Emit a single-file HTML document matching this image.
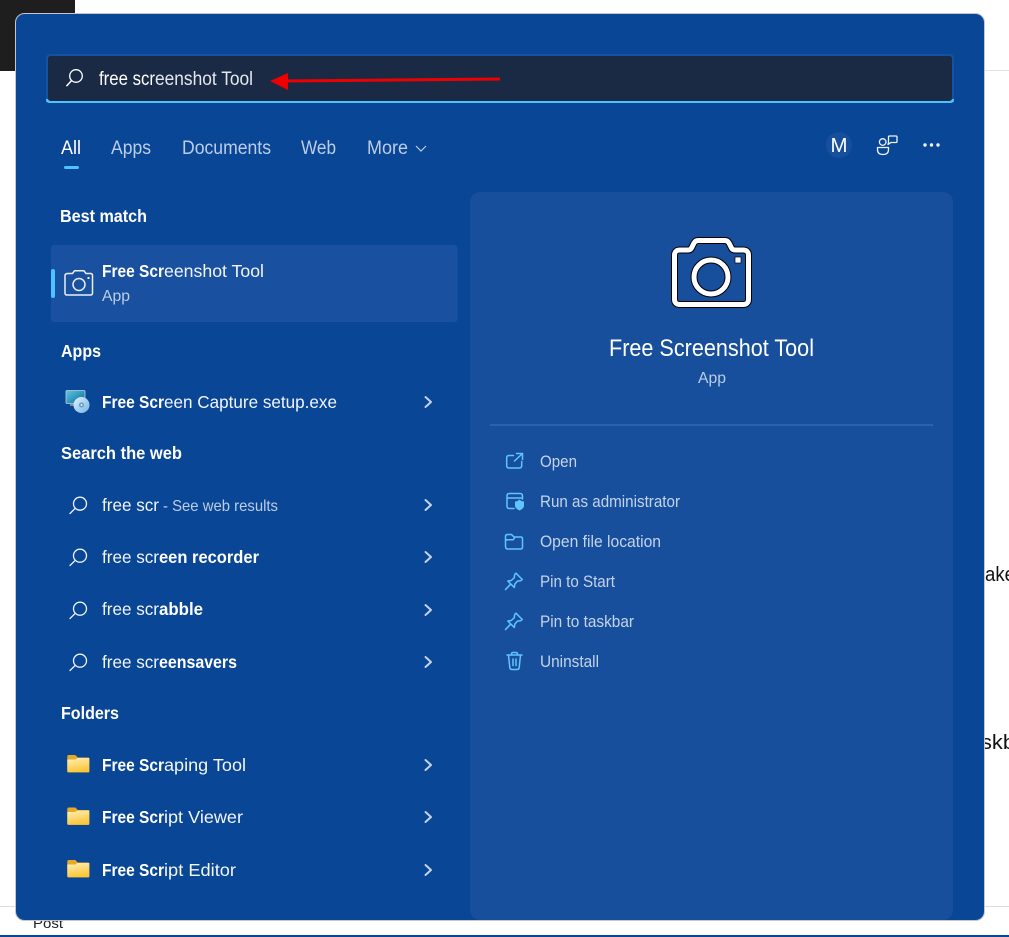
<!DOCTYPE html>
<html><head><meta charset="utf-8"><title>Search</title>
<style>
html,body{margin:0;padding:0;background:#fff;width:1009px;height:937px;overflow:hidden}
svg{display:block}
text{font-family:"Liberation Sans",sans-serif;fill:#fff;font-size:17.5px}
.b{font-weight:bold}
.h{font-weight:bold;font-size:17.5px}
.n{fill:#f2f5fa}
.tab{font-size:19px;fill:#bccde8}
.sub{fill:#bccde8;font-size:16px}
.act{fill:#c4d3ea;font-size:16.5px}
.bg{fill:#111;font-size:20px}
.ic{fill:none;stroke:#60c5ff;stroke-width:1.500;stroke-linejoin:round;stroke-linecap:round}
.s{fill:none;stroke:#eef3fa;stroke-width:1.300;stroke-linecap:round}
.c{fill:none;stroke:#c5d3ea;stroke-width:2;stroke-linecap:round;stroke-linejoin:round}
</style></head><body>
<svg width="1009" height="937" viewBox="0 0 1009 937" xmlns="http://www.w3.org/2000/svg">
<defs>
<linearGradient id="fg" x1="0" y1="0" x2="0.300" y2="1"><stop offset="0" stop-color="#fff0ba"/><stop offset="1" stop-color="#fcc73c"/></linearGradient>
<linearGradient id="cd" x1="0" y1="0" x2="1" y2="1"><stop offset="0" stop-color="#e4f3fb"/><stop offset="1" stop-color="#6fb4e4"/></linearGradient>
<linearGradient id="mon" x1="0" y1="0" x2="1" y2="1"><stop offset="0" stop-color="#5ec6e4"/><stop offset="1" stop-color="#0a6c9c"/></linearGradient>
<g id="srch"><circle cx="10" cy="-1.300" r="6.500" class="s"/><path d="M5.300 3.300L0 8.500" class="s"/></g>
<path id="chev" d="M-2.500 -5L3 0L-2.500 5" class="c"/>
<g id="fold"><path d="M0 1.500Q0 0 1.500 0H8L10.500 2.500H21Q22 2.500 22 4V16.500Q22 17.500 21 17.500H1Q0 17.500 0 16.500Z" fill="#e6a92a"/><path d="M0 4.500H8L10 3H22V16Q22 17 21 17H1Q0 17 0 16Z" fill="url(#fg)"/></g>
<g id="pin"><path d="M11 0.700L17.300 7L15.700 8.200L12.500 8.600L9.800 11.600L9.300 15L2.800 8.500L6.200 8L9.200 5.300L9.700 2Z" class="ic"/><path d="M5.500 11.800L0.500 17" class="ic"/></g>
</defs>

<!-- page behind -->
<rect width="1009" height="937" fill="#fff"/>
<rect x="0" y="0" width="75" height="71" fill="#1e1e1e"/>
<rect x="75" y="70" width="934" height="1" fill="#e3e3e3"/>
<rect x="106" y="13" width="39" height="1" fill="#3d5f8c"/>
<rect x="0" y="906" width="1009" height="1" fill="#dcdcdc"/>
<rect x="0" y="935" width="1009" height="2" fill="#0a4696"/>
<text x="33" y="928" style="font-size:14px;fill:#222" textLength="30" lengthAdjust="spacingAndGlyphs">Post</text>
<text x="985" y="581" class="bg" textLength="30" lengthAdjust="spacingAndGlyphs">ake</text>
<text x="981" y="749" class="bg" textLength="34" lengthAdjust="spacingAndGlyphs">skb</text>

<!-- panel -->
<rect x="15.500" y="13.500" width="969" height="907" rx="9" fill="#0a4696" stroke="#c4c8ce" stroke-width="1"/>
<rect x="470" y="192" width="483" height="728" rx="10" fill="#174f9d"/>

<!-- search -->
<rect x="46" y="54" width="908" height="49" rx="4" fill="#15529f"/>
<path d="M46 99V100Q46 103 50 103H950Q954 103 954 100V99Z" fill="#4cc2ff"/>
<rect x="48" y="56" width="904" height="45" rx="2.500" fill="#1a2a44"/>
<g><circle cx="76" cy="76" r="6.300" fill="none" stroke="#fff" stroke-width="1.300"/><path d="M71.500 80.600L66.800 85.700" stroke="#fff" stroke-width="1.500" stroke-linecap="round"/></g>
<text x="99" y="85" style="font-size:19px" textLength="56" lengthAdjust="spacingAndGlyphs">free scr</text>
<text x="155" y="85" style="font-size:19px;fill:#e4e8ee" textLength="98" lengthAdjust="spacingAndGlyphs">eenshot Tool</text>
<path d="M500 79L285 81" stroke="#ee0000" stroke-width="3" fill="none"/>
<path d="M270 81L288 73V90Z" fill="#ee0000"/>

<!-- tabs -->
<text x="61" y="154" style="font-size:19px" textLength="20" lengthAdjust="spacingAndGlyphs">All</text>
<text x="111" y="154" class="tab" textLength="40" lengthAdjust="spacingAndGlyphs">Apps</text>
<text x="182" y="154" class="tab" textLength="89" lengthAdjust="spacingAndGlyphs">Documents</text>
<text x="301" y="154" class="tab" textLength="35" lengthAdjust="spacingAndGlyphs">Web</text>
<text x="367" y="154" class="tab" textLength="41" lengthAdjust="spacingAndGlyphs">More</text>
<path d="M416 146L421 151L426 146" fill="none" stroke="#bccde8" stroke-width="1.200"/>
<rect x="64" y="166" width="15" height="3" rx="1.500" fill="#4cc2ff"/>

<!-- top right -->
<circle cx="839" cy="145" r="13" fill="#174f9d"/>
<text x="830.500" y="152" style="font-size:20px" textLength="17" lengthAdjust="spacingAndGlyphs">M</text>
<g fill="none" stroke="#eef3fa" stroke-width="1.300" stroke-linejoin="round">
<circle cx="882.700" cy="142" r="3.300"/>
<path d="M877.500 147.500H888.500V149.500Q888.500 154.500 883 154.500Q877.500 154.500 877.500 149.500Z"/>
<path d="M889.500 136H896Q897 136 897 137V141.500Q897 142.500 896 142.500H891L888 144.500L888.500 142.500V137Q888.500 136 889.500 136Z"/>
</g>
<circle cx="925" cy="145" r="1.700" fill="#f0f4fa"/><circle cx="931.500" cy="145" r="1.700" fill="#f0f4fa"/><circle cx="938" cy="145" r="1.700" fill="#f0f4fa"/>

<!-- best match -->
<text x="60" y="222" class="h" textLength="87" lengthAdjust="spacingAndGlyphs">Best match</text>
<rect x="51" y="245" width="406.500" height="77" rx="3" fill="#1a50a0"/>
<rect x="51" y="269" width="4" height="29" rx="2" fill="#4cc2ff"/>
<path d="M68 273.500H72.500L74.500 270.800H84L86 273.500H90.500Q92.500 273.500 92.500 275.500V293Q92.500 295 90.500 295H67Q65 295 65 293V275.500Q65 273.500 68 273.500Z" fill="none" stroke="#e8eef6" stroke-width="1.500" stroke-linejoin="round"/>
<circle cx="79" cy="284.500" r="6" fill="none" stroke="#e8eef6" stroke-width="1.500"/>
<rect x="87.500" y="277" width="2" height="2" fill="#e8eef6"/>
<text x="102" y="277" class="b" textLength="62" lengthAdjust="spacingAndGlyphs">Free Scr</text>
<text x="164" y="277" class="n" textLength="100" lengthAdjust="spacingAndGlyphs">eenshot Tool</text>
<text x="102" y="301" class="sub" textLength="28" lengthAdjust="spacingAndGlyphs">App</text>

<!-- apps -->
<text x="61" y="357" class="h" textLength="40" lengthAdjust="spacingAndGlyphs">Apps</text>
<rect x="66" y="390.500" width="19" height="13" rx="1" fill="url(#mon)" stroke="#bcd3de" stroke-width="0.800"/>
<rect x="70" y="404" width="10" height="2" fill="#7d8f9c"/>
<circle cx="81.500" cy="405" r="8" fill="url(#cd)"/><circle cx="81.500" cy="405" r="2.500" fill="#5f9cc8"/><circle cx="81.500" cy="405" r="1" fill="#e9f5fb"/>
<text x="102" y="408" class="b" textLength="62" lengthAdjust="spacingAndGlyphs">Free Scr</text>
<text x="164" y="408" class="n" textLength="173" lengthAdjust="spacingAndGlyphs">een Capture setup.exe</text>
<use href="#chev" x="428" y="402"/>

<!-- web -->
<text x="61" y="459" class="h" textLength="121" lengthAdjust="spacingAndGlyphs">Search the web</text>
<use href="#srch" x="70" y="505"/>
<text x="102" y="511" class="n" textLength="57" lengthAdjust="spacingAndGlyphs">free scr</text>
<text x="163" y="511" class="sub" textLength="115" lengthAdjust="spacingAndGlyphs">- See web results</text>
<use href="#chev" x="428" y="505"/>
<use href="#srch" x="70" y="557"/>
<text x="102" y="563" class="n" textLength="57" lengthAdjust="spacingAndGlyphs">free scr</text>
<text x="159" y="563" class="b" textLength="100" lengthAdjust="spacingAndGlyphs">een recorder</text>
<use href="#chev" x="428" y="557"/>
<use href="#srch" x="70" y="610"/>
<text x="102" y="615" class="n" textLength="57" lengthAdjust="spacingAndGlyphs">free scr</text>
<text x="159" y="615" class="b" textLength="44" lengthAdjust="spacingAndGlyphs">abble</text>
<use href="#chev" x="428" y="610"/>
<use href="#srch" x="70" y="662"/>
<text x="102" y="668" class="n" textLength="57" lengthAdjust="spacingAndGlyphs">free scr</text>
<text x="159" y="668" class="b" textLength="78" lengthAdjust="spacingAndGlyphs">eensavers</text>
<use href="#chev" x="428" y="662"/>

<!-- folders -->
<text x="61" y="719" class="h" textLength="58" lengthAdjust="spacingAndGlyphs">Folders</text>
<use href="#fold" x="67.300" y="755"/>
<text x="102" y="771" class="b" textLength="62" lengthAdjust="spacingAndGlyphs">Free Scr</text>
<text x="164" y="771" class="n" textLength="82" lengthAdjust="spacingAndGlyphs">aping Tool</text>
<use href="#chev" x="428" y="765"/>
<use href="#fold" x="67.300" y="807.500"/>
<text x="102" y="823" class="b" textLength="62" lengthAdjust="spacingAndGlyphs">Free Scr</text>
<text x="164" y="823" class="n" textLength="79" lengthAdjust="spacingAndGlyphs">ipt Viewer</text>
<use href="#chev" x="428" y="817"/>
<use href="#fold" x="67.300" y="860"/>
<text x="102" y="876" class="b" textLength="62" lengthAdjust="spacingAndGlyphs">Free Scr</text>
<text x="164" y="876" class="n" textLength="72" lengthAdjust="spacingAndGlyphs">ipt Editor</text>
<use href="#chev" x="428" y="870"/>

<!-- right pane -->
<g fill="none" stroke-linejoin="round">
<path d="M680 250H688Q690.500 250 691.500 248L694 243Q695.500 240.500 698 240.500H725Q727.500 240.500 729 243L731.500 248Q732.500 250 735 250H743Q748.500 250 748.500 255.500V299Q748.500 304.500 743 304.500H680Q674.500 304.500 674.500 299V255.500Q674.500 250 680 250Z" stroke="#000" stroke-width="7"/>
<path d="M680 250H688Q690.500 250 691.500 248L694 243Q695.500 240.500 698 240.500H725Q727.500 240.500 729 243L731.500 248Q732.500 250 735 250H743Q748.500 250 748.500 255.500V299Q748.500 304.500 743 304.500H680Q674.500 304.500 674.500 299V255.500Q674.500 250 680 250Z" stroke="#fff" stroke-width="5"/>
<circle cx="711" cy="277" r="17" stroke="#000" stroke-width="7"/>
<circle cx="711" cy="277" r="17" stroke="#fff" stroke-width="5"/>
</g>
<rect x="735" y="257" width="6" height="6" fill="#fff" stroke="#000" stroke-width="0.700"/>
<text x="609" y="356" style="font-size:24.500px" textLength="205" lengthAdjust="spacingAndGlyphs">Free Screenshot Tool</text>
<text x="698" y="383" class="sub" textLength="28" lengthAdjust="spacingAndGlyphs">App</text>
<rect x="490" y="424" width="443" height="2" fill="#2c62ac"/>

<text x="540" y="467" class="act" textLength="37" lengthAdjust="spacingAndGlyphs">Open</text>
<text x="540" y="507" class="act" textLength="140" lengthAdjust="spacingAndGlyphs">Run as administrator</text>
<text x="540" y="547" class="act" textLength="121" lengthAdjust="spacingAndGlyphs">Open file location</text>
<text x="540" y="587" class="act" textLength="75" lengthAdjust="spacingAndGlyphs">Pin to Start</text>
<text x="540" y="627" class="act" textLength="94" lengthAdjust="spacingAndGlyphs">Pin to taskbar</text>
<text x="540" y="667" class="act" textLength="59" lengthAdjust="spacingAndGlyphs">Uninstall</text>

<!-- action icons -->
<path d="M513.500 455.500H509Q506.700 455.500 506.700 457.800V465.500Q506.700 468 509 468H519.500Q521.700 468 521.700 465.500V461.500M514.500 461L522.500 453.500M516.500 453.500H522.500V459.500" class="ic"/>
<path d="M514 508.500H509.500Q507 508.500 507 506V496Q507 493.500 509.500 493.500H520Q522.500 493.500 522.500 496V499M507 498H522.500" class="ic"/>
<path d="M519.500 499.500Q517.500 501.500 515 501.500V505.500Q515 508.500 519.500 510.500Q524 508.500 524 505.500V501.500Q521.500 501.500 519.500 499.500Z" fill="#60c5ff"/>
<path d="M505.500 546V536.500Q505.500 534.500 507.500 534.500H511.500L514 537H521Q522.500 537 522.500 539V547Q522.500 549 520.500 549H507.500Q505.500 549 505.500 546ZM505.500 541.500Q505.500 539.800 507.500 539.800H513L514.500 538" class="ic"/>
<use href="#pin" x="505" y="572.500"/>
<use href="#pin" x="505" y="612.500"/>
<path d="M507 655H522M511.500 655V654Q511.500 652.500 513 652.500H516Q517.500 652.500 517.500 654V655M508.500 655L509.800 667.500Q510 669.500 512 669.500H517Q519 669.500 519.200 667.500L520.500 655M513 659V665.500M516 659V665.500" class="ic"/>
</svg>
</body></html>
